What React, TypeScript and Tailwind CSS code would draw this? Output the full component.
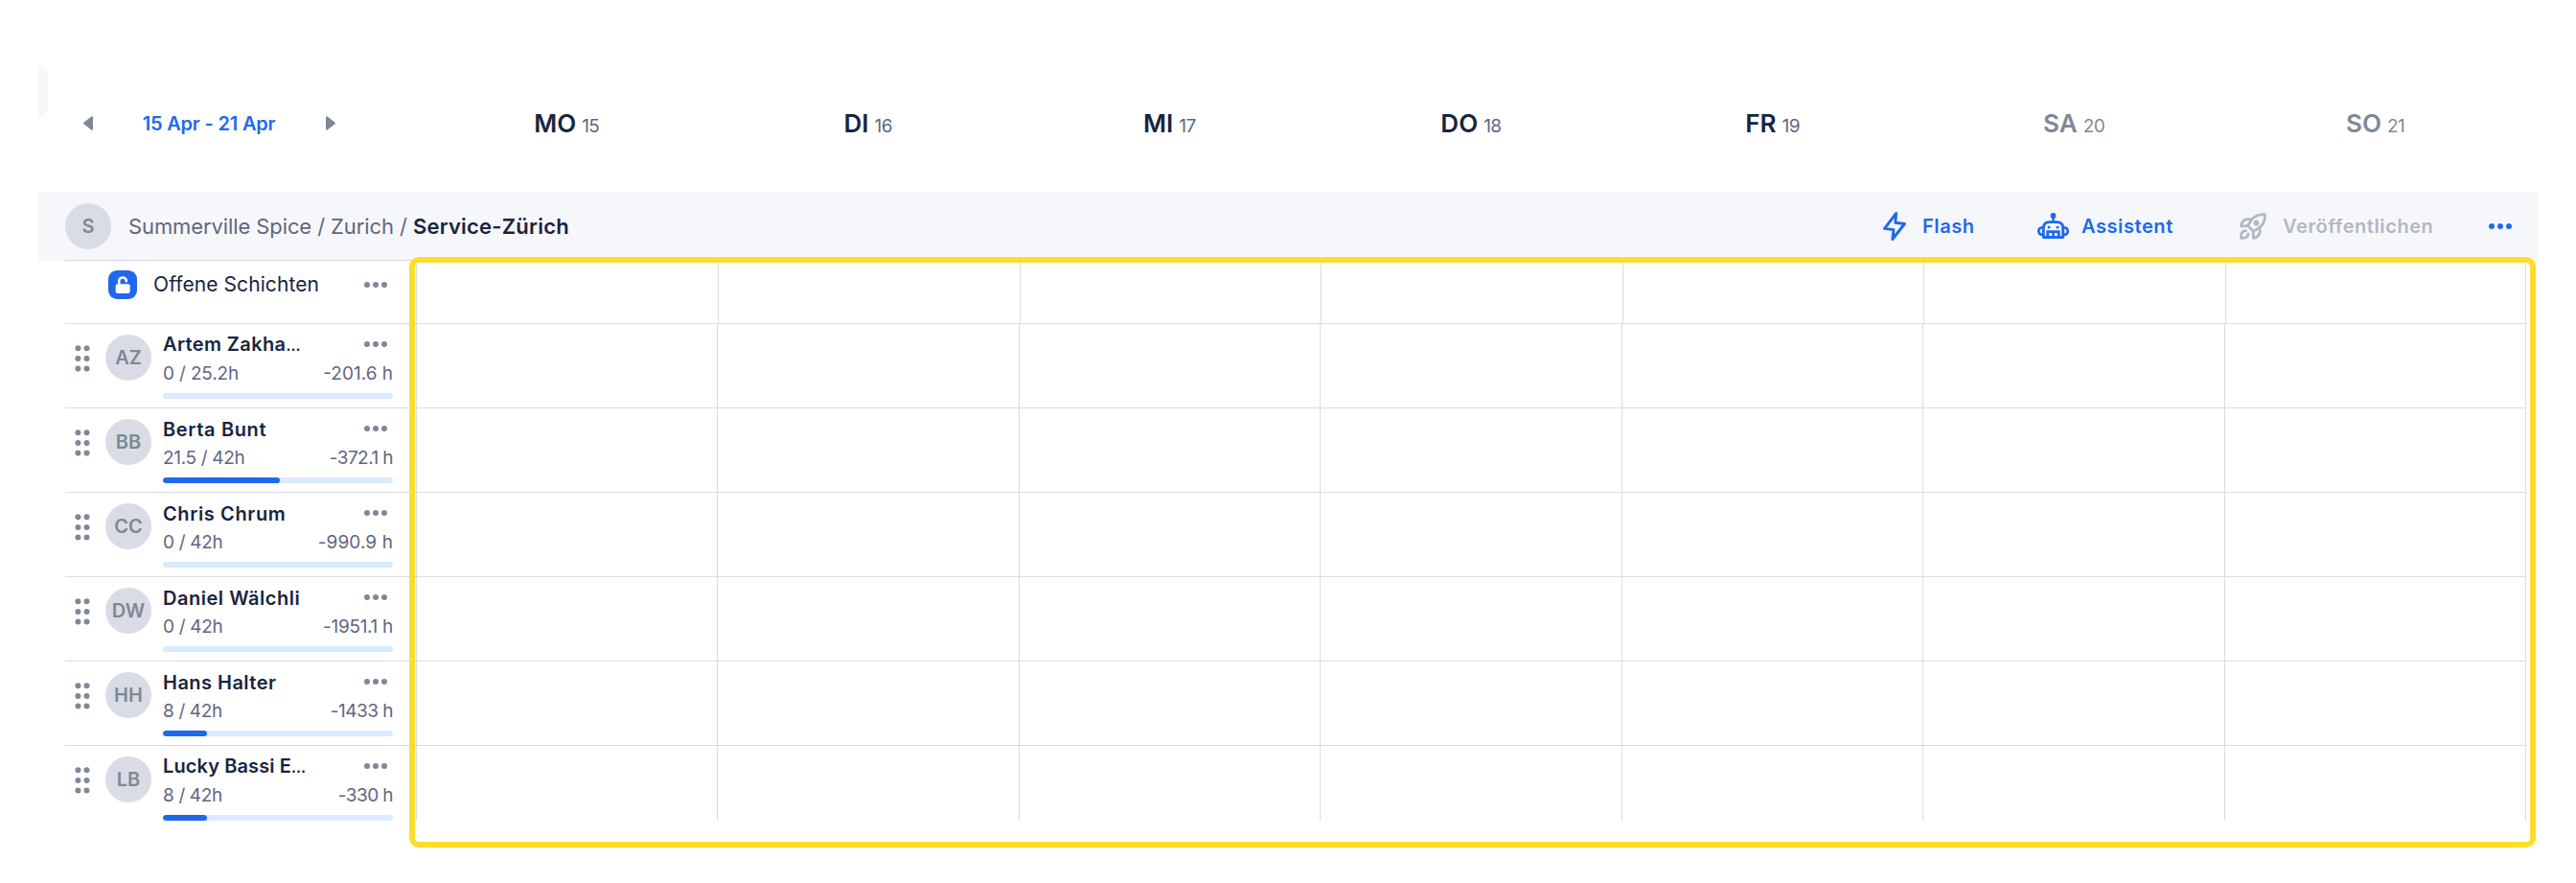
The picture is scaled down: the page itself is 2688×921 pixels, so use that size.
import React from "react";

type Day = { name: string; num: string; weekend?: boolean };

const DAYS: Day[] = [
  { name: "MO", num: "15" },
  { name: "DI", num: "16" },
  { name: "MI", num: "17" },
  { name: "DO", num: "18" },
  { name: "FR", num: "19" },
  { name: "SA", num: "20", weekend: true },
  { name: "SO", num: "21", weekend: true },
];

type Person = {
  initials: string;
  name: string;
  cut?: boolean;
  nameTracking: string;
  hours: string;
  hoursTracking: string;
  balance: string;
  balanceTracking: string;
  fill: number;
};

const PEOPLE: Person[] = [
  { initials: "AZ", name: "Artem Zakha", cut: true, nameTracking: "tracking-[0.38px]", hours: "0 / 25.2h", hoursTracking: "tracking-[-0.15px]", balance: "-201.6 h", balanceTracking: "tracking-[0px]", fill: 0 },
  { initials: "BB", name: "Berta Bunt", nameTracking: "tracking-[0.65px]", hours: "21.5 / 42h", hoursTracking: "tracking-[-0.33px]", balance: "-372.1 h", balanceTracking: "tracking-[-0.57px]", fill: 122 },
  { initials: "CC", name: "Chris Chrum", nameTracking: "tracking-[0.62px]", hours: "0 / 42h", hoursTracking: "tracking-[-0.31px]", balance: "-990.9 h", balanceTracking: "tracking-[0.1px]", fill: 0 },
  { initials: "DW", name: "Daniel Wälchli", nameTracking: "tracking-[0.52px]", hours: "0 / 42h", hoursTracking: "tracking-[-0.31px]", balance: "-1951.1 h", balanceTracking: "tracking-[-0.3px]", fill: 0 },
  { initials: "HH", name: "Hans Halter", nameTracking: "tracking-[0.47px]", hours: "8 / 42h", hoursTracking: "tracking-[-0.36px]", balance: "-1433 h", balanceTracking: "tracking-[-0.51px]", fill: 46 },
  { initials: "LB", name: "Lucky Bassi E", cut: true, nameTracking: "tracking-[0.12px]", hours: "8 / 42h", hoursTracking: "tracking-[-0.36px]", balance: "-330 h", balanceTracking: "tracking-[-0.57px]", fill: 46 },
];

function Dots({ className = "" }: { className?: string }) {
  return (
    <svg viewBox="0 0 24 6" className={`h-[6px] w-[24px] shrink-0 ${className}`} fill="currentColor">
      <circle cx="3" cy="3" r="3" />
      <circle cx="12" cy="3" r="3" />
      <circle cx="21" cy="3" r="3" />
    </svg>
  );
}

function DragHandle() {
  return (
    <svg viewBox="0 0 16 28" className="mt-[22px] h-[28px] w-[16px] shrink-0 text-[#7f8896]" fill="currentColor">
      {[3.3, 14, 24.6].map((y) => (
        <g key={y}>
          <circle cx="3.4" cy={y} r="3" />
          <circle cx="12.5" cy={y} r="3" />
        </g>
      ))}
    </svg>
  );
}

function Triangle({ flip = false }: { flip?: boolean }) {
  return (
    <svg viewBox="0 0 10 15" className={`h-[15px] w-[10px] shrink-0 text-[#7f8896] ${flip ? "rotate-180" : ""}`}>
      <path d="M9 1.2V13.8L1 7.5Z" fill="currentColor" stroke="currentColor" strokeWidth="2" strokeLinejoin="round" />
    </svg>
  );
}

function BoltIcon() {
  return (
    <svg viewBox="0 0 24 30" className="h-[30px] w-[24px] shrink-0" fill="none" stroke="currentColor" strokeWidth="2.9" strokeLinejoin="round">
      <path d="M13.6 1.5L1.5 17.4L11 18.6L9.8 28.5L22.4 12.5L12.8 11.3Z" />
    </svg>
  );
}

function RobotIcon() {
  return (
    <svg viewBox="0 0 33 27" className="h-[27px] w-[33px] shrink-0" fill="none" stroke="currentColor">
      <circle cx="16.5" cy="3" r="2.9" fill="currentColor" stroke="none" />
      <path d="M16.5 4V9" strokeWidth="2.4" />
      <path d="M6.3 25.5V16Q6.3 9.6 12.8 9.6H20.2Q26.7 9.6 26.7 16V25.5Z" strokeWidth="2.9" strokeLinejoin="round" />
      <path d="M5 15.2Q1.3 15.4 1.3 19T5 22.9M28 15.2Q31.7 15.4 31.7 19T28 22.9" strokeWidth="2.6" />
      <circle cx="12" cy="15" r="1.5" fill="currentColor" stroke="none" />
      <circle cx="21" cy="15" r="1.5" fill="currentColor" stroke="none" />
      <path
        d="M9.3 18.2H23.7V27H9.3ZM12.2 21V24.2H15.2V21ZM17.8 21V24.2H20.8V21Z"
        fill="currentColor"
        fillRule="evenodd"
        stroke="none"
      />
    </svg>
  );
}

function RocketIcon() {
  return (
    <svg viewBox="0 0 28 28" className="h-[28px] w-[28px] shrink-0" fill="none" stroke="currentColor" strokeWidth="2.8" strokeLinejoin="round" strokeLinecap="round">
      <path d="M26.3 1.6C17.5 1.2 13 5 8.6 13.6L14.2 19.3C23 15 26.9 10.5 26.3 1.6Z" />
      <path d="M12 6.8C6.5 5.8 2.6 7.5 1.5 13.8L8.6 13.6" />
      <path d="M21 16.2C22 21.5 20.2 25.2 14.2 26.4V19.3" />
      <path d="M6.5 18.8C2.2 18.4 1.4 21.8 1.5 26.3C6 26.6 9 25.5 8.9 21.8" />
      <circle cx="17.4" cy="10.5" r="2.9" fill="currentColor" stroke="none" />
    </svg>
  );
}

function UnlockBadge() {
  return (
    <div className="h-[30px] w-[30px] shrink-0 rounded-[9px] bg-[#2068ec] text-white">
      <svg viewBox="0 0 30 30" className="h-full w-full" fill="none">
        <rect x="7.7" y="14.2" width="15" height="9.8" rx="2" fill="currentColor" />
        <path d="M11.2 15V11.4C11.2 6.2 18.8 6.2 18.8 11.2" stroke="currentColor" strokeWidth="2.6" strokeLinecap="round" />
      </svg>
    </div>
  );
}

function Avatar({ label, className = "" }: { label: string; className?: string }) {
  return (
    <div className={`flex h-[48px] w-[48px] shrink-0 items-center justify-center rounded-full bg-[#d9dce4] text-[20px] leading-none font-semibold text-[#7f8896] ${className}`}>
      {label}
    </div>
  );
}

function DayHeader({ day }: { day: Day }) {
  return (
    <div className="flex items-baseline justify-center gap-[6px] leading-[34px]">
      <span className={`text-[26px] font-semibold ${day.weekend ? "text-[#7f8896]" : "text-[#172540]"}`}>{day.name}</span>
      <span className={`text-[19px] tracking-[-0.5px] ${day.weekend ? "text-[#7f8896]" : "text-[#5f6680]"}`}>{day.num}</span>
    </div>
  );
}

function Cells({ open = false }: { open?: boolean }) {
  return (
    <div
      className={`grid h-full w-[2202px] shrink-0 border-r border-[#d9dbe1] ${
        open ? "grid-cols-[315px_repeat(5,314.5px)_1fr]" : "grid-cols-7"
      }`}
    >
      {DAYS.map((d) => (
        <div key={d.name} className="border-l border-[#d9dbe1]" />
      ))}
    </div>
  );
}

function PersonRow({ person, last }: { person: Person; last: boolean }) {
  return (
    <div className={`flex w-[2568px] ${last ? "h-[78px]" : "h-[88px] border-b border-[#d9dbe1]"}`}>
      <div className="flex w-[366px] shrink-0 pl-[10px]">
        <DragHandle />
        <Avatar label={person.initials} className="mt-[11px] ml-[16px]" />
        <div className="ml-[12px] w-[240px]">
          <div className="mt-[10px] flex h-[24px] items-center justify-between pr-[6px]">
            <span className={`text-[20px] leading-[24px] font-semibold whitespace-nowrap text-[#172540] ${person.nameTracking}`}>
              {person.name}
              {person.cut && <span className="text-[15px] font-bold">…</span>}
            </span>
            <Dots className="mb-[2px] text-[#7f8896]" />
          </div>
          <div className="mt-[6px] flex h-[24px] justify-between text-[19px] leading-[24px] whitespace-nowrap text-[#5f6680]">
            <span className={person.hoursTracking}>{person.hours}</span>
            <span className={person.balanceTracking}>{person.balance}</span>
          </div>
          <div className="mt-[8px] h-[6px] overflow-hidden rounded-[3px] bg-[#d9ebff]">
            <div className="h-full rounded-[3px] bg-[#2068ec]" style={{ width: person.fill }} />
          </div>
        </div>
      </div>
      <Cells />
    </div>
  );
}

export default function App() {
  return (
    <div className="relative h-[921px] w-[2688px] overflow-hidden bg-white font-['Inter',sans-serif]">
      <header className="flex h-[200px] pl-[40px]">
        <div className="mt-[68px] h-[54px] w-[10px] rounded-r-[10px] bg-[#f6f7fb]" />
        <div className="mt-[112px] mr-[84px] ml-[37px] flex h-[33px] w-[263px] items-center justify-between">
          <Triangle />
          <span className="pr-px text-[20px] font-semibold tracking-[-0.18px] text-[#2068ec]">15 Apr - 21 Apr</span>
          <Triangle flip />
        </div>
        <div className="mt-[112px] grid h-[34px] w-[2202px] grid-cols-7">
          {DAYS.map((d) => (
            <DayHeader key={d.name} day={d} />
          ))}
        </div>
      </header>

      <section className="mx-[40px] flex h-[71px] items-center bg-[#f6f7fb] pr-[27px] pl-[28px]">
        <Avatar label="S" />
        <div className="ml-[18px] text-[22px] leading-none whitespace-nowrap text-[#5f6680]">
          <span className="tracking-[-0.1px]">Summerville Spice / Zurich / </span>
          <span className="font-semibold tracking-[0.22px] text-[#172540]">Service-Zürich</span>
        </div>
        <div className="ml-auto flex items-center text-[20px] leading-none font-semibold tracking-[0.58px] text-[#2068ec]">
          <div className="flex w-[161px] items-center gap-[17px]">
            <BoltIcon />
            Flash
          </div>
          <div className="flex w-[211px] items-center gap-[13px]">
            <RobotIcon />
            Assistent
          </div>
          <div className="flex w-[260px] items-center gap-[17px] text-[#b2b8c1]">
            <RocketIcon />
            Veröffentlichen
          </div>
          <Dots />
        </div>
      </section>

      <main className="mx-[40px] flex bg-[linear-gradient(to_bottom,#f6f7fb_1px,white_1px)] pl-[28px]">
        <div>
          <div className="flex h-[67px] w-[2568px] border-y border-[#d9dbe1]">
            <div className="flex h-[49px] w-[366px] shrink-0 items-center pl-[45px]">
              <UnlockBadge />
              <span className="ml-[17px] text-[21px] leading-none tracking-[0.08px] text-[#172540]">Offene Schichten</span>
              <Dots className="mr-[30px] ml-auto text-[#7f8896]" />
            </div>
            <Cells open />
          </div>
          {PEOPLE.map((p, i) => (
            <PersonRow key={p.initials} person={p} last={i === PEOPLE.length - 1} />
          ))}
        </div>
      </main>

      <div className="absolute top-[268px] left-[427px] h-[616px] w-[2219px] rounded-[10px] border-[6px] border-[#ffdc2b]" />
    </div>
  );
}
